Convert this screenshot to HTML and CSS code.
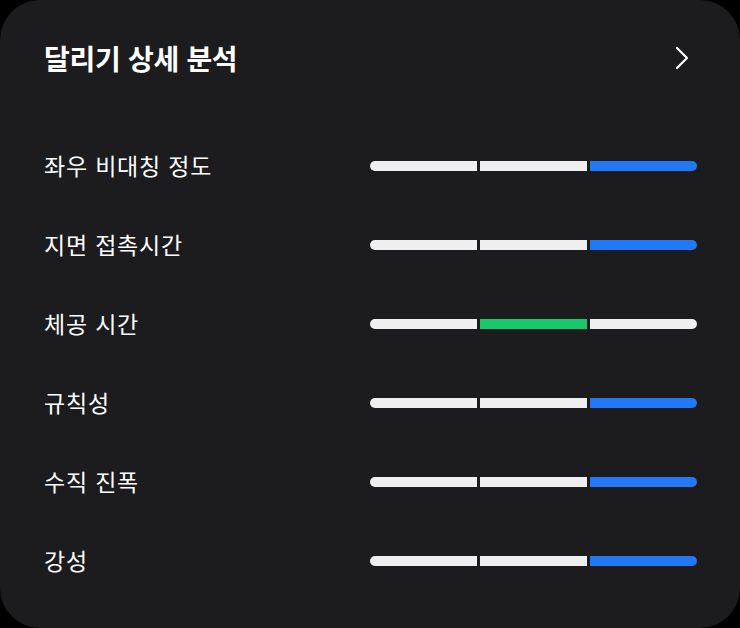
FILE: index.html
```html
<!DOCTYPE html>
<html lang="ko">
<head>
<meta charset="utf-8">
<link rel="stylesheet" href="styles.css">
</head>
<body>
<div class="card">
  <div class="header">
    <h1 class="title">달리기 상세 분석</h1>
    <svg class="chev" width="16" height="24" viewBox="0 0 16 24"><path d="M3 2 L13 12 L3 22" fill="none" stroke="#fff" stroke-width="2.2" stroke-linecap="round" stroke-linejoin="round"/></svg>
  </div>
  <div class="list">
    <div class="row"><span class="label">좌우 비대칭 정도</span><div class="bar"><i class="seg"></i><i class="seg"></i><i class="seg blue"></i></div></div>
    <div class="row"><span class="label">지면 접촉시간</span><div class="bar"><i class="seg"></i><i class="seg"></i><i class="seg blue"></i></div></div>
    <div class="row"><span class="label">체공 시간</span><div class="bar"><i class="seg"></i><i class="seg green"></i><i class="seg"></i></div></div>
    <div class="row"><span class="label">규칙성</span><div class="bar"><i class="seg"></i><i class="seg"></i><i class="seg blue"></i></div></div>
    <div class="row"><span class="label">수직 진폭</span><div class="bar"><i class="seg"></i><i class="seg"></i><i class="seg blue"></i></div></div>
    <div class="row"><span class="label">강성</span><div class="bar"><i class="seg"></i><i class="seg"></i><i class="seg blue"></i></div></div>
  </div>
</div>
</body>
</html>
```
FILE: styles.css
```css
html, body {
  margin: 0;
  padding: 0;
  background: #000;
}
body {
  font-family: "Noto Sans CJK KR", "Noto Sans", sans-serif;
  color: #fff;
}
.card {
  width: 740px;
  height: 628px;
  box-sizing: border-box;
  background: #1c1c1e;
  border-radius: 40px;
  padding: 21px 43px 0 44px;
  display: flex;
  flex-direction: column;
}
.header {
  height: 74px;
  display: flex;
  align-items: center;
  justify-content: space-between;
}
.title {
  margin: 0;
  font-size: 28px;
  font-weight: 700;
  letter-spacing: -0.3px;
}
.chev {
  margin-right: 7px;
  margin-bottom: 1px;
  display: block;
}
.list {
  margin-top: 31px;
  display: flex;
  flex-direction: column;
}
.row {
  height: 79px;
  display: flex;
  align-items: center;
  justify-content: space-between;
}
.label {
  font-size: 23px;
  font-weight: 400;
  letter-spacing: 0.8px;
  position: relative;
  top: -1px;
}
.bar {
  width: 327px;
  height: 10px;
  display: flex;
  gap: 3px;
}
.seg {
  flex: 1;
  background: #efefef;
}
.seg:first-child {
  border-radius: 5px 0 0 5px;
}
.seg:last-child {
  border-radius: 0 5px 5px 0;
}
.seg.blue {
  background: #2278f5;
}
.seg.green {
  background: #17c96b;
}
```
